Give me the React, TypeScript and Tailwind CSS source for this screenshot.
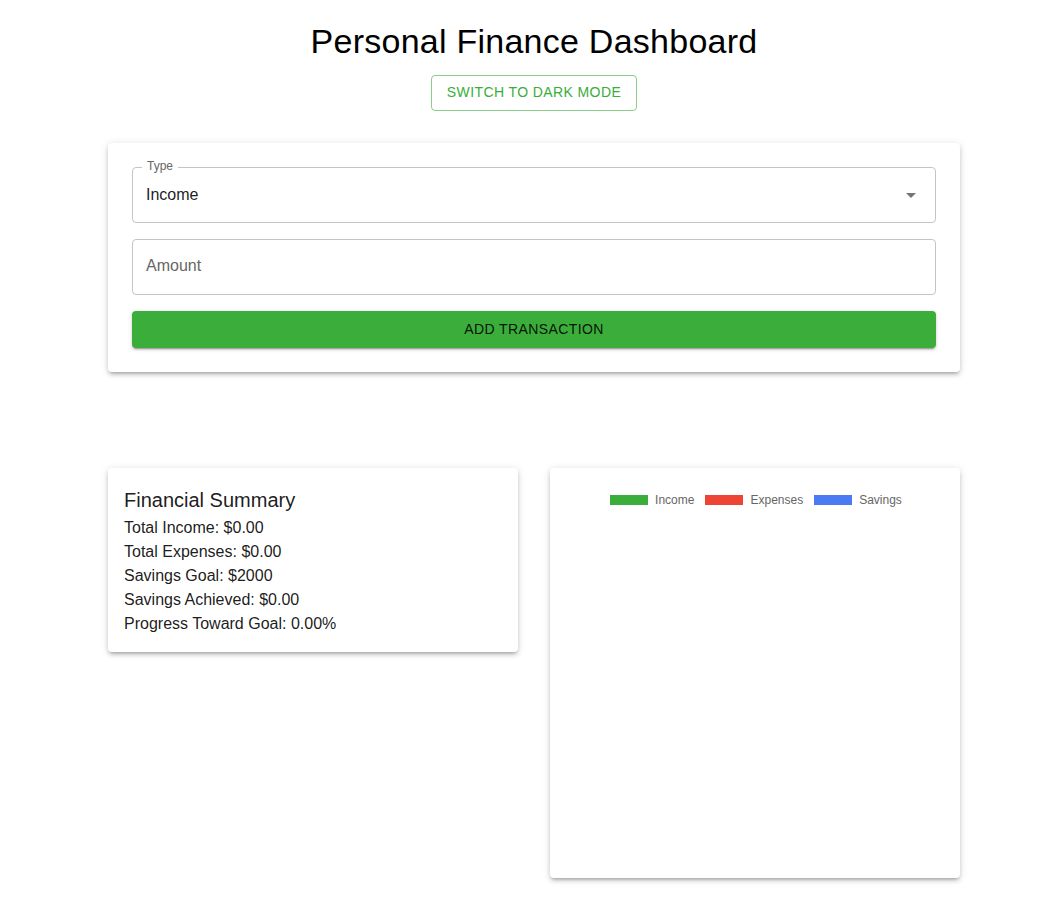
import React from 'react';

const font = { fontFamily: '"Liberation Sans", Arial, sans-serif' };

const cardShadow =
  'shadow-[0px_3px_3px_-2px_rgba(0,0,0,0.2),0px_3px_4px_0px_rgba(0,0,0,0.14),0px_1px_8px_0px_rgba(0,0,0,0.12)]';

const LegendItem: React.FC<{ color: string; label: string }> = ({ color, label }) => (
  <div className="flex items-center gap-[7px]">
    <span className={`block w-[38px] h-[10px] ${color}`} />
    <span className="text-[12px] text-[#666]">{label}</span>
  </div>
);

const App: React.FC = () => {
  return (
    <div className="min-h-[902px] bg-white text-black pl-[22px]" style={font}>
      <div className="w-[852px] mx-auto flex flex-col items-center">
        <h1 className="text-[34px] leading-[1.235] mt-[21px] tracking-[0.25px]">Personal Finance Dashboard</h1>
        <button className="mt-[12px] h-[36px] px-[15px] rounded-[4px] border border-[#3aad3a]/60 text-[#3aad3a] text-[14px] font-medium uppercase tracking-[0.4px]">
          Switch to Dark Mode
        </button>

        <div className={`w-full mt-[32px] bg-white rounded-[4px] p-[24px] flex flex-col gap-[16px] ${cardShadow}`}>
          <div className="relative h-[56px] rounded-[4px] border border-[#c4c4c4] flex items-center pl-[13px] pr-[12px]">
            <span className="absolute -top-[9px] left-[9px] px-[5px] bg-white text-[12px] leading-[14px] text-[#666]">Type</span>
            <span className="text-[16px] flex-1 text-black/90">Income</span>
            <svg width="24" height="24" viewBox="0 0 24 24" className="fill-[#757575]">
              <path d="M7 10l5 5 5-5z" />
            </svg>
          </div>
          <div className="h-[56px] rounded-[4px] border border-[#c4c4c4] flex items-center pl-[13px] pb-[1px]">
            <span className="text-[16px] text-[#666]">Amount</span>
          </div>
          <button className="h-[37px] rounded-[4px] bg-[#3aad3a] text-[14px] font-medium uppercase tracking-[0.4px] text-black/90 shadow-[0px_3px_1px_-2px_rgba(0,0,0,0.2),0px_2px_2px_0px_rgba(0,0,0,0.14),0px_1px_5px_0px_rgba(0,0,0,0.12)]">
            Add Transaction
          </button>
        </div>

        <div className="w-full mt-[96px] grid grid-cols-2 gap-[32px] items-start">
          <div className={`bg-white rounded-[4px] p-[16px] ${cardShadow}`}>
            <h2 className="text-[20px] leading-[32px] text-black/90">Financial Summary</h2>
            <div className="text-[16px] leading-[24px] text-black/90">
              <p>Total Income: $0.00</p>
              <p>Total Expenses: $0.00</p>
              <p>Savings Goal: $2000</p>
              <p>Savings Achieved: $0.00</p>
              <p>Progress Toward Goal: 0.00%</p>
            </div>
          </div>
          <div className={`bg-white rounded-[4px] h-[410px] pt-[23px] ${cardShadow}`}>
            <div className="flex justify-center gap-[11px] pl-[2px]">
              <LegendItem color="bg-[#3aad3a]" label="Income" />
              <LegendItem color="bg-[#ee4433]" label="Expenses" />
              <LegendItem color="bg-[#4a7bf5]" label="Savings" />
            </div>
          </div>
        </div>
      </div>
    </div>
  );
};

export default App;
